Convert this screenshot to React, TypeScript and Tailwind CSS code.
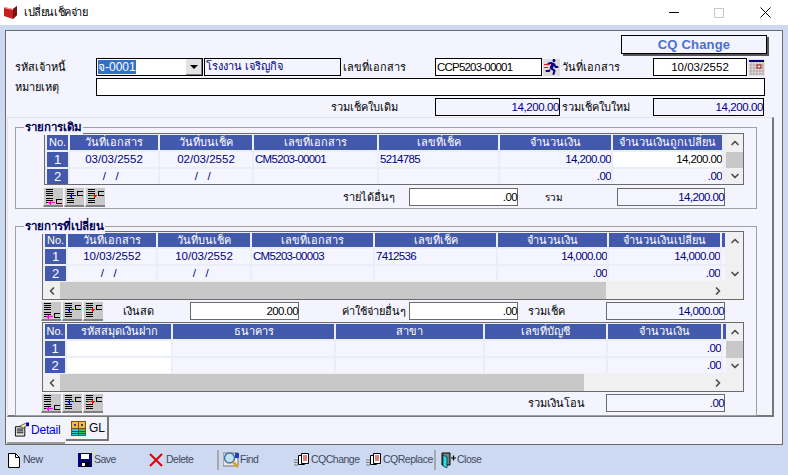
import { ChevronDown, ChevronLeft, ChevronRight, ChevronUp } from "lucide-react";
import { FaRunning } from "react-icons/fa";

type Column = { label: string; align?: "left" | "right" | "center"; white?: number[]; dark?: number[] };

const alignClass = {
  left: "text-left pl-[1px] tracking-[-0.7px]",
  right: "text-right tracking-[-0.6px]",
  center: "text-center",
};

const NO_DATE = "/\u00a0\u00a0\u00a0/\u00a0\u00a0";

const Scroll = ({ dir }: { dir: "up" | "down" | "left" | "right" }) => {
  const Icon = { up: ChevronUp, down: ChevronDown, left: ChevronLeft, right: ChevronRight }[dir];
  return <Icon className="w-[12px] h-[12px] text-[#505050]" strokeWidth={3.5} />;
};

const DataGrid = ({
  cols,
  columns,
  rows,
  width,
  rowHeights,
  thumb,
  hThumb,
}: {
  cols: string;
  columns: Column[];
  rows: string[][];
  width: string;
  rowHeights: string;
  thumb?: string;
  hThumb?: string;
}) => (
  <div className={`flex border border-[#6b6b6b] bg-[#f0f0f0] ${width}`}>
    <div className="flex-1 min-w-0 flex flex-col">
      <div className={`grid gap-[2px] pl-[2px] pt-[1px] pb-[1px] bg-[#eceef7] overflow-hidden ${cols} ${rowHeights}`}>
        {columns.map((c, i) => (
          <div key={i} className="bg-[#4359ac] text-white text-[11px] text-center leading-[15px] overflow-hidden whitespace-nowrap">
            {c.label}
          </div>
        ))}
        {rows.map((row, r) =>
          row.map((v, i) =>
            i === 0 ? (
              <div key={i} className="bg-[#4359ac] text-white text-[13px] text-center leading-[15px]">
                {v}
              </div>
            ) : (
              <div
                key={i}
                className={`${columns[i].white?.includes(r) ? "bg-white" : "bg-[#f4f5fe]"} ${columns[i].dark?.includes(r) ? "text-black" : "text-[#000080]"} ${alignClass[columns[i].align ?? "left"]} text-[11.5px] leading-[15px] overflow-hidden whitespace-nowrap`}
              >
                {v}
              </div>
            ),
          ),
        )}
      </div>
      {hThumb && (
        <div className="h-[17px] mt-[1px] flex items-center bg-[#f0f0f0]">
          <div className="w-[17px] flex justify-center">
            <Scroll dir="left" />
          </div>
          <div className={`h-full bg-[#c8c8c8] ${hThumb}`} />
          <div className="flex-1" />
          <div className="w-[17px] flex justify-center">
            <Scroll dir="right" />
          </div>
        </div>
      )}
    </div>
    <div className="w-[17px] shrink-0 flex flex-col items-center bg-[#f0f0f0]">
      <div className="h-[18px] flex items-center">
        <Scroll dir="up" />
      </div>
      <div className={`w-full ${thumb ?? "h-[16px]"} ${thumb ? "bg-[#c8c8c8]" : ""}`} />
      <div className="h-[16px] flex items-center">
        <Scroll dir="down" />
      </div>
    </div>
  </div>
);

const RowTool = ({ arrow, kind }: { arrow: string; kind: number }) => (
  <div className="w-[20px] h-[20px] bg-[#c8c8c8] border-b-2 border-[#808080] border-t border-l border-t-[#f0f0f0] border-l-[#f0f0f0]">
    <svg viewBox="0 0 19 17" className="w-[19px] h-[17px]" shapeRendering="crispEdges">
      <path d="M2 1.500h7M2 3.500h7M2 5.500h7M2 7.500h7" stroke="#000" fill="none" />
      <path d="M2 10.500h7M2 12.500h7M2 14.500h7" stroke="#000" fill="none" />
      {kind === 0 && (
        <>
          <path d="M18 11.500h-6v4h6" stroke="#000" fill="none" />
          <path d="M11 14.500h-7M6.500 12.500v4M5.500 13.500v2" stroke="#f0f" fill="none" />
        </>
      )}
      {kind === 1 && (
        <>
          <path d="M18 3.500h-6v4h6" stroke="#000" fill="none" />
          <path d="M11 7.500h-7M6.500 5.500v4M5.500 6.500v2" stroke={arrow} fill="none" />
        </>
      )}
      {kind === 2 && (
        <>
          <path d="M18 3.500h-6v4h6" stroke="#000" fill="none" />
          <path d="M4 7.500h7M8.500 5.500v4M9.500 6.500v2" stroke={arrow} fill="none" />
        </>
      )}
    </svg>
  </div>
);

const RowTools = () => (
  <div className="flex gap-[1px] shrink-0">
    <RowTool arrow="#f0f" kind={0} />
    <RowTool arrow="#00f" kind={1} />
    <RowTool arrow="#f00" kind={2} />
  </div>
);

const Label = ({ text, className }: { text: string; className?: string }) => (
  <span className={`text-[11px] leading-[17px] text-black whitespace-nowrap ${className ?? ""}`}>{text}</span>
);

const Amount = ({ value, className, readOnly }: { value: string; className: string; readOnly?: boolean }) => (
  <div
    className={`h-[18px] border text-right text-[11.5px] leading-[16px] tracking-[-0.6px] shrink-0 ${readOnly ? "border-[#6b6b6b] bg-[#f4f5fe] text-[#000080]" : "border-[#6b6b6b] bg-white text-black"} ${className}`}
  >
    {value}
  </div>
);

const Legend = ({ text }: { text: string }) => (
  <span className="absolute left-[8px] -top-[9px] px-[1px] bg-[#f3f4fd] text-[11.5px] leading-[16px] font-bold text-[#000050] whitespace-nowrap">
    {text}
  </span>
);

const BookIcon = () => (
  <svg viewBox="0 0 16 15" className="w-[16px] h-[15px]">
    <path d="M1 2l9 2 4-3v9l-4 4-9-3z" fill="#c81e1e" />
    <path d="M10 4l4-3v9l-4 4z" fill="#7a1010" />
    <path d="M1 2l9 2v1L1 3z" fill="#f2b0b0" />
  </svg>
);

const CalendarIcon = () => (
  <svg viewBox="0 0 17 17" className="w-[17px] h-[17px]">
    <rect width="17" height="17" fill="#e3e3e3" />
    <rect x="1" y="1" width="15" height="2" fill="#000080" />
    <path d="M1 6h15M1 9h15M1 12h15M1 15h15M3 3v13M6 3v13M9 3v13M12 3v13M15 3v13" stroke="#a89090" strokeWidth="0.7" />
    <rect x="9" y="6" width="4" height="3" fill="#fff" stroke="#a00000" />
  </svg>
);

const PagesIcon = () => (
  <svg viewBox="0 0 16 14" className="w-[16px] h-[14px]">
    <path d="M0 7h4M0 9.500h4M0 12h4" stroke="#777" />
    <path d="M4.500 2.500h6v9h-6z" fill="#fff" stroke="#000" />
    <path d="M7.500.5h7v10h-7z" fill="#fff" stroke="#000" />
    <path d="M9 3h4M9 5h4M9 7h4" stroke="#c00000" />
  </svg>
);

const ToolItem = ({ icon, text, className }: { icon: React.ReactNode; text: string; className: string }) => (
  <div className={`flex items-center shrink-0 ${className}`}>
    {icon}
    <span className="text-[10.5px] text-[#3f4a60] tracking-[-0.5px] whitespace-nowrap">{text}</span>
  </div>
);

export default function App() {
  return (
    <div className="w-[788px] h-[475px] overflow-hidden flex flex-col bg-[#cdd9f1] font-['Liberation_Sans','Noto_Sans',sans-serif]">
      {/* title bar */}
      <div className="h-[25px] bg-white flex items-center shrink-0">
        <div className="ml-[3px]">
          <BookIcon />
        </div>
        <span className="ml-[5px] text-[11px] tracking-[-0.4px] text-black">เปลี่ยนเช็คจ่าย</span>
        <div className="ml-auto flex items-center">
          <div className="w-[10px] h-[1px] bg-black mr-[35px]" />
          <div className="w-[10px] h-[10px] border border-[#c8c8c8] mr-[36px]" />
          <svg viewBox="0 0 11 11" className="w-[11px] h-[11px] mr-[17px]">
            <path d="M.5.5l10 10M10.500.5l-10 10" stroke="#000" />
          </svg>
        </div>
      </div>

      {/* form */}
      <div className="mt-[5px] ml-[5px] w-[778px] h-[415px] shrink-0 border border-[#6b6b6b] bg-[#f3f4fd]">
        <div className="flex justify-end pt-[4px] pr-[15px]">
          <div className="w-[146px] h-[19px] border border-black shadow-[2px_2px_0_#555] bg-[#f3f4fd] text-center text-[13px] leading-[17px] font-bold tracking-[0.2px] text-[#4a6fd0]">
            CQ Change
          </div>
        </div>

        <div className="flex mt-[4px] h-[18px] items-center">
          <Label text="รหัสเจ้าหนี้" className="ml-[9px] w-[81px]" />
          <div className="w-[107px] h-[18px] border border-black bg-white flex items-center pl-[1px]">
            <span className="bg-[#3470c8] text-white text-[12px] leading-[14px]">จ-0001</span>
            <div className="ml-auto w-[16px] h-[16px] bg-[#e3e3e3] border-r border-b border-[#808080] flex items-center justify-center">
              <div className="border-x-[4px] border-x-transparent border-t-[4px] border-t-black" />
            </div>
          </div>
          <div className="ml-[1px] w-[137px] h-[18px] border border-black text-[11px] leading-[15px] pl-[1px] text-[#000080]">โรงงาน เจริญกิจ</div>
          <Label text="เลขที่เอกสาร" className="ml-[2px] w-[92px]" />
          <div className="w-[107px] h-[18px] border border-black bg-white text-[11.5px] leading-[16px] pl-[1px] tracking-[-0.8px] text-black">CCP5203-00001</div>
          <div className="relative ml-[1px] w-[17px] h-[17px] bg-[#dcdcdc] flex items-center justify-center">
            <FaRunning className="w-[16px] h-[16px] text-[#000080]" />
            <div className="absolute left-[1px] top-[5px] w-[5px] h-[1px] bg-[#d02020]" />
            <div className="absolute left-[1px] top-[8px] w-[4px] h-[1px] bg-[#d02020]" />
          </div>
          <Label text="วันที่เอกสาร" className="ml-[2px] w-[91px]" />
          <div className="w-[94px] h-[18px] border border-black bg-white text-center text-[11.5px] leading-[16px] text-black">10/03/2552</div>
          <div className="ml-[1px]">
            <CalendarIcon />
          </div>
        </div>

        <div className="flex mt-[2px] h-[18px] items-center">
          <Label text="หมายเหตุ" className="ml-[9px] w-[81px]" />
          <div className="w-[669px] h-[18px] border border-black bg-white" />
        </div>

        <div className="flex mt-[2px] h-[18px] items-center">
          <Label text="รวมเช็คใบเดิม" className="ml-[325px] w-[104px]" />
          <div className="w-[125px] h-[18px] border border-black text-right text-[11.5px] leading-[16px] tracking-[-0.4px] text-[#000080]">14,200.00</div>
          <Label text="รวมเช็คใบใหม่" className="ml-[2px] w-[91px]" />
          <div className="w-[111px] h-[18px] border border-black text-right text-[11.5px] leading-[16px] tracking-[-0.4px] text-[#000080]">14,200.00</div>
        </div>

        {/* tab page */}
        <div className="ml-[1px] mt-[1px] w-[767px] h-[300px] border-t border-l border-t-[#e3e3e3] border-l-[#e3e3e3] border-r-2 border-b-2 border-r-[#777] border-b-[#777] flex flex-col">
          <div className="relative mt-[9px] ml-[7px] w-[742px] h-[82px] border border-[#a0a0a0] shrink-0">
            <Legend text="รายการเดิม" />
            <div className="ml-[28px] mt-[5px]">
              <DataGrid
                width="w-[700px]"
                cols="grid-cols-[21px_88px_92px_123px_119px_111px_109px]"
                rowHeights="grid-rows-[15px_15px_15px] h-[50px]"
                thumb="h-[16px]"
                columns={[
                  { label: "No." },
                  { label: "วันที่เอกสาร", align: "center" },
                  { label: "วันที่บนเช็ค", align: "center" },
                  { label: "เลขที่เอกสาร" },
                  { label: "เลขที่เช็ค" },
                  { label: "จำนวนเงิน", align: "right" },
                  { label: "จำนวนเงินถูกเปลี่ยน", align: "right", white: [0], dark: [0] },
                ]}
                rows={[
                  ["1", "03/03/2552", "02/03/2552", "CM5203-00001", "5214785", "14,200.00", "14,200.00"],
                  ["2", NO_DATE, NO_DATE, "", "", ".00", ".00"],
                ]}
              />
            </div>
            <div className="flex items-center mt-[2px] ml-[27px]">
              <RowTools />
              <Label text="รายได้อื่นๆ" className="ml-[238px] w-[66px]" />
              <Amount value=".00" className="w-[109px]" />
              <span className="ml-[27px] w-[72px] text-[10px] text-black">รวม</span>
              <Amount value="14,200.00" className="w-[108px]" readOnly />
            </div>
          </div>

          <div className="relative mt-[17px] ml-[7px] w-[742px] h-[190px] border border-[#a0a0a0] shrink-0">
            <Legend text="รายการที่เปลี่ยน" />
            <div className="ml-[26px] mt-[4px]">
              <DataGrid
                width="w-[702px]"
                cols="grid-cols-[21px_88px_92px_121px_121px_109px_111px_3px]"
                rowHeights="grid-rows-[14px_15px_15px] h-[49px]"
                hThumb="w-[546px]"
                columns={[
                  { label: "No." },
                  { label: "วันที่เอกสาร", align: "center" },
                  { label: "วันที่บนเช็ค", align: "center" },
                  { label: "เลขที่เอกสาร" },
                  { label: "เลขที่เช็ค" },
                  { label: "จำนวนเงิน", align: "right" },
                  { label: "จำนวนเงินเปลี่ยน", align: "right" },
                  { label: "" },
                ]}
                rows={[
                  ["1", "10/03/2552", "10/03/2552", "CM5203-00003", "7412536", "14,000.00", "14,000.00", ""],
                  ["2", NO_DATE, NO_DATE, "", "", ".00", ".00", ""],
                ]}
              />
            </div>
            <div className="flex items-center mt-[1px] ml-[25px]">
              <RowTools />
              <Label text="เงินสด" className="ml-[20px] w-[67px]" />
              <Amount value="200.00" className="w-[109px]" />
              <Label text="ค่าใช้จ่ายอื่นๆ" className="ml-[43px] w-[67px]" />
              <Amount value=".00" className="w-[109px]" />
              <Label text="รวมเช็ค" className="ml-[10px] w-[78px]" />
              <Amount value="14,000.00" className="w-[119px]" readOnly />
            </div>
            <div className="ml-[26px] mt-[1px]">
              <DataGrid
                width="w-[702px]"
                cols="grid-cols-[20px_104px_161px_147px_121px_113px_3px]"
                rowHeights="grid-rows-[15px_15px_15px] h-[50px]"
                thumb="h-[17px]"
                hThumb="w-[524px]"
                columns={[
                  { label: "No." },
                  { label: "รหัสสมุดเงินฝาก", white: [0, 1] },
                  { label: "ธนาคาร" },
                  { label: "สาขา" },
                  { label: "เลขที่บัญชี" },
                  { label: "จำนวนเงิน", align: "right" },
                  { label: "" },
                ]}
                rows={[
                  ["1", "", "", "", "", ".00", ""],
                  ["2", "", "", "", "", ".00", ""],
                ]}
              />
            </div>
            <div className="flex items-center mt-[1px] ml-[25px]">
              <RowTools />
              <Label text="รวมเงินโอน" className="ml-[425px] w-[78px]" />
              <Amount value=".00" className="w-[119px]" readOnly />
            </div>
          </div>
        </div>

        {/* tabs */}
        <div className="flex ml-[1px] h-[27px]">
          <div className="w-[58px] h-[27px] flex items-center pl-[7px] gap-[2px] border-b-2 border-[#9a9a9a]">
            <svg viewBox="0 0 16 15" className="w-[15px] h-[15px]">
              <path d="M1.500 4.500h10v10h-10z" fill="#e8e8e8" stroke="#000" />
              <path d="M3 7h7M3 9h7M3 11h7" stroke="#000" />
              <path d="M6 4l6-3 3 1-5 4z" fill="#f5e9a0" stroke="#000" strokeWidth=".6" />
              <path d="M13 0h3v4h-3z" fill="#0000c0" />
            </svg>
            <span className="text-[12px] text-[#0000e0] tracking-[-0.2px]">Detail</span>
          </div>
          <div className="ml-[1px] w-[43px] h-[24px] border-r-2 border-b-2 border-[#777] bg-[#f3f4fd] flex items-center pl-[5px] gap-[3px]">
            <svg viewBox="0 0 15 15" className="w-[15px] h-[15px]" shapeRendering="crispEdges">
              <rect width="15" height="15" fill="#8a4a10" />
              <rect x="1" y="1" width="6" height="6" fill="#f5c030" />
              <rect x="8" y="1" width="6" height="6" fill="#f5c030" />
              <rect x="3" y="3" width="2" height="2" fill="#2040c0" />
              <rect x="10" y="3" width="2" height="2" fill="#2040c0" />
              <rect x="1" y="8" width="6" height="6" fill="#30c8e0" />
              <rect x="8" y="8" width="6" height="6" fill="#30c070" />
              <path d="M1 10.500h13M1 12.500h13" stroke="#2040c0" />
            </svg>
            <span className="text-[12px] text-black">GL</span>
          </div>
        </div>
      </div>

      {/* toolbar */}
      <div className="flex items-center h-[28px] mt-[1px] pl-[8px] shrink-0">
        <ToolItem
          className="w-[70px] gap-[3px]"
          text="New"
          icon={
            <svg viewBox="0 0 12 15" className="w-[12px] h-[15px]">
              <path d="M.5.5h7l4 4v10H.5z" fill="#fff" stroke="#000" />
              <path d="M7.500.5v4h4" fill="none" stroke="#000" />
            </svg>
          }
        />
        <ToolItem
          className="w-[71px] gap-[2px]"
          text="Save"
          icon={
            <svg viewBox="0 0 14 14" className="w-[14px] h-[14px]">
              <path d="M0 0h14v14H0z" fill="#000080" />
              <path d="M3 1h8v5H3z" fill="#fff" />
              <path d="M3 9h8v5H3z" fill="#000" />
              <path d="M4 10h3v3H4z" fill="#fff" />
            </svg>
          }
        />
        <ToolItem
          className="w-[68px] gap-[3px]"
          text="Delete"
          icon={
            <svg viewBox="0 0 14 14" className="w-[14px] h-[14px]">
              <path d="M1 1l12 12M13 1L1 13" stroke="#e00000" strokeWidth="2" />
            </svg>
          }
        />
        <div className="w-[2px] h-[20px] bg-[#a8a8a8] mr-[4px]" />
        <ToolItem
          className="w-[71px]"
          text="Find"
          icon={
            <svg viewBox="0 0 17 16" className="w-[17px] h-[16px]">
              <path d="M0 1h15v13H0z" fill="#e8e8e8" stroke="#777" />
              <circle cx="6.500" cy="6" r="5" fill="#bfe3f5" stroke="#4a6fa0" strokeWidth="1.500" />
              <path d="M10 10l5 5" stroke="#d8a020" strokeWidth="2.500" />
              <path d="M12 1h4v5h-4z" fill="#2040c0" />
            </svg>
          }
        />
        <ToolItem className="w-[72px] gap-[1px]" text="CQChange" icon={<PagesIcon />} />
        <ToolItem className="w-[68px] gap-[1px]" text="CQReplace" icon={<PagesIcon />} />
        <div className="w-[2px] h-[20px] bg-[#a8a8a8] mr-[5px]" />
        <ToolItem
          className="gap-[1px]"
          text="Close"
          icon={
            <svg viewBox="0 0 15 16" className="w-[15px] h-[16px]">
              <path d="M1 1h8v12H1z" fill="#808080" stroke="#000" />
              <path d="M2 3l4 2v11l-4-2z" fill="#20e0f0" stroke="#000" strokeWidth=".6" />
              <path d="M10 6h5M12.500 3.500v5" stroke="#000" strokeWidth="1.200" />
            </svg>
          }
        />
      </div>
    </div>
  );
}
